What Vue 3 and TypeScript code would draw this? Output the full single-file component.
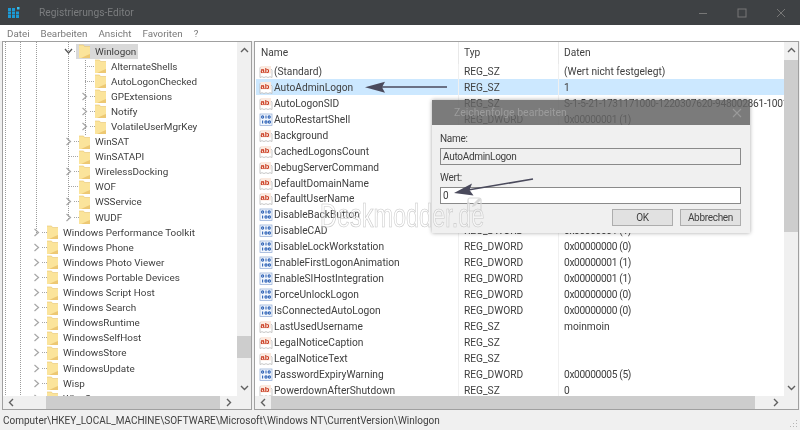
<script setup lang="ts">
interface TreeRow { name: string; level: number; kind: 'open' | 'closed' | 'leaf' }
interface ListRow { name: string; type: string; data: string; bin: boolean }
interface Guide { x: number; top: number; height: number }

const tree: TreeRow[] = [
  { name: 'Winlogon', level: 2, kind: 'open' },
  { name: 'AlternateShells', level: 3, kind: 'leaf' },
  { name: 'AutoLogonChecked', level: 3, kind: 'leaf' },
  { name: 'GPExtensions', level: 3, kind: 'closed' },
  { name: 'Notify', level: 3, kind: 'closed' },
  { name: 'VolatileUserMgrKey', level: 3, kind: 'closed' },
  { name: 'WinSAT', level: 2, kind: 'closed' },
  { name: 'WinSATAPI', level: 2, kind: 'leaf' },
  { name: 'WirelessDocking', level: 2, kind: 'closed' },
  { name: 'WOF', level: 2, kind: 'leaf' },
  { name: 'WSService', level: 2, kind: 'closed' },
  { name: 'WUDF', level: 2, kind: 'closed' },
  { name: 'Windows Performance Toolkit', level: 1, kind: 'closed' },
  { name: 'Windows Phone', level: 1, kind: 'closed' },
  { name: 'Windows Photo Viewer', level: 1, kind: 'closed' },
  { name: 'Windows Portable Devices', level: 1, kind: 'closed' },
  { name: 'Windows Script Host', level: 1, kind: 'closed' },
  { name: 'Windows Search', level: 1, kind: 'closed' },
  { name: 'WindowsRuntime', level: 1, kind: 'closed' },
  { name: 'WindowsSelfHost', level: 1, kind: 'closed' },
  { name: 'WindowsStore', level: 1, kind: 'closed' },
  { name: 'WindowsUpdate', level: 1, kind: 'closed' },
  { name: 'Wisp', level: 1, kind: 'closed' },
  { name: 'WlanSvc', level: 1, kind: 'closed' },
]

const guides: Guide[] = [
  { x: 2, top: 0, height: 355 },
  { x: 17, top: 0, height: 355 },
  { x: 33, top: 0, height: 192 },
  { x: 65, top: 0, height: 178 },
  { x: 82, top: 16, height: 78 },
]

const sz = (name: string, data = ''): ListRow => ({ name, type: 'REG_SZ', data, bin: false })
const dw = (name: string, data: string): ListRow => ({ name, type: 'REG_DWORD', data, bin: true })

const rows: ListRow[] = [
  sz('(Standard)', '(Wert nicht festgelegt)'),
  sz('AutoAdminLogon', '1'),
  sz('AutoLogonSID', 'S-1-5-21-1731171000-1220307620-948002861-1001'),
  dw('AutoRestartShell', '0x00000001 (1)'),
  sz('Background', '0 0 0'),
  sz('CachedLogonsCount', '10'),
  sz('DebugServerCommand', 'no'),
  sz('DefaultDomainName'),
  sz('DefaultUserName', 'moinmoin'),
  dw('DisableBackButton', '0x00000001 (1)'),
  dw('DisableCAD', '0x00000001 (1)'),
  dw('DisableLockWorkstation', '0x00000000 (0)'),
  dw('EnableFirstLogonAnimation', '0x00000001 (1)'),
  dw('EnableSIHostIntegration', '0x00000001 (1)'),
  dw('ForceUnlockLogon', '0x00000000 (0)'),
  dw('IsConnectedAutoLogon', '0x00000000 (0)'),
  sz('LastUsedUsername', 'moinmoin'),
  sz('LegalNoticeCaption'),
  sz('LegalNoticeText'),
  dw('PasswordExpiryWarning', '0x00000005 (5)'),
  sz('PowerdownAfterShutdown', '0'),
]

const menus = ['Datei', 'Bearbeiten', 'Ansicht', 'Favoriten', '?']
</script>

<template>
  <div class="win">
    <header class="titlebar">
      <svg class="appicon" width="12" height="11" viewBox="0 0 12 11">
        <g fill="#1c9ad6">
          <rect x="0" y="1" width="3" height="3" /><rect x="4" y="1" width="3" height="3" />
          <rect x="0" y="4.5" width="3" height="3" /><rect x="4" y="4.5" width="3" height="3" /><rect x="8" y="4.5" width="3" height="3" />
          <rect x="0" y="8" width="3" height="3" /><rect x="4" y="8" width="3" height="3" /><rect x="8" y="8" width="3" height="3" />
        </g>
        <rect x="9" y="0" width="2.5" height="2.5" fill="#35c0f0" />
      </svg>
      <span class="apptitle">Registrierungs-Editor</span>
      <div class="controls">
        <svg width="10" height="10" viewBox="0 0 10 10"><path d="M1 5.500h8" stroke="#777" fill="none" /></svg>
        <svg width="10" height="10" viewBox="0 0 10 10"><rect x="1" y="1" width="8" height="8" stroke="#777" fill="none" /></svg>
        <svg width="10" height="10" viewBox="0 0 10 10"><path d="M1 1l8 8M9 1l-8 8" stroke="#777" fill="none" /></svg>
      </div>
    </header>

    <nav class="menu">
      <span v-for="m in menus" :key="m">{{ m }}</span>
    </nav>

    <main class="panes">
      <section class="pane tree-pane">
        <div class="tree">
          <i v-for="g in guides" :key="g.x" class="guide" :style="{ left: g.x + 'px', top: g.top + 'px', height: g.height + 'px' }"></i>
          <div v-for="t in tree" :key="t.name" class="tree-row" :class="'lv' + t.level">
            <span class="exp">
              <svg v-if="t.kind === 'closed'" width="7" height="9" viewBox="0 0 7 9"><path d="M1.500 1l4 3.500-4 3.500" fill="none" stroke="#a6a6a6" stroke-width="1.2" /></svg>
              <svg v-else-if="t.kind === 'open'" width="9" height="7" viewBox="0 0 9 7"><path d="M1 1l3.500 4 3.500-4" fill="none" stroke="#555" stroke-width="1.3" /></svg>
            </span>
            <span class="dash" :class="{ long: t.kind === 'leaf' }"></span>
            <span class="node" :class="{ sel: t.name === 'Winlogon' }">
              <svg class="folder" width="11" height="14" viewBox="0 0 11 14">
                <path d="M0 1h4.500l1 1.500H11V14H0z" fill="#fbe49b" />
                <path d="M8.500 11l2.500-1v4H2z" fill="#edc873" />
                <path d="M0 1h4.500l1 1.500H11" fill="none" stroke="#e8c56e" stroke-width=".6" />
              </svg>
              <span class="label">{{ t.name }}</span>
            </span>
          </div>
        </div>
        <div class="vbar">
          <svg class="ar" width="9" height="7" viewBox="0 0 9 7"><path d="M1 5l3.500-3.500L8 5" fill="none" stroke="#606060" stroke-width="1.4" /></svg>
          <div class="track tree-track"><div class="thumb tree-thumb"></div></div>
          <svg class="ar" width="9" height="7" viewBox="0 0 9 7"><path d="M1 2l3.500 3.500L8 2" fill="none" stroke="#606060" stroke-width="1.4" /></svg>
        </div>
        <div class="hbar">
          <svg class="ar" width="7" height="9" viewBox="0 0 7 9"><path d="M5 1L1.500 4.500 5 8" fill="none" stroke="#606060" stroke-width="1.4" /></svg>
          <div class="track htrack"><div class="thumb tree-hthumb"></div></div>
          <svg class="ar" width="7" height="9" viewBox="0 0 7 9"><path d="M2 1l3.500 3.500L2 8" fill="none" stroke="#606060" stroke-width="1.4" /></svg>
        </div>
        <div class="corner"></div>
      </section>

      <section class="pane list-pane">
        <div class="list">
          <div class="list-head">
            <span class="c-name">Name</span>
            <span class="c-type">Typ</span>
            <span class="c-data">Daten</span>
          </div>
          <div v-for="r in rows" :key="r.name" class="list-row" :class="{ picked: r.name === 'AutoAdminLogon' }">
            <span class="c-name">
              <svg v-if="!r.bin" class="ico" width="14" height="15" viewBox="0 0 14 15">
                <path d="M1 3.500h9.500l2.500 2.500v7.500l-2-.8-2 .8-2-.8-2 .8-2-.8-2 .8z" fill="#fff" stroke="#b9b9b9" stroke-width=".8" />
                <rect x="1.500" y="2" width="10.500" height="7.500" fill="#fbe9df" />
                <text x="1.600" y="8.800" class="ab">ab</text>
              </svg>
              <svg v-else class="ico" width="14" height="15" viewBox="0 0 14 15">
                <rect x="1" y="2" width="12" height="11.500" fill="#f3f7fd" stroke="#8fa9d4" stroke-width=".7" />
                <g fill="none" stroke="#2f63b6" stroke-width="1.1">
                  <circle cx="3.600" cy="5" r="1.100" /><path d="M7 3.600v3" /><circle cx="10.200" cy="5" r="1.100" />
                  <path d="M3.600 8.600v3" /><circle cx="7" cy="10" r="1.100" /><circle cx="10.400" cy="10" r="1.100" />
                </g>
              </svg>
              {{ r.name }}
            </span>
            <span class="c-type">{{ r.type }}</span>
            <span class="c-data" :class="{ hex: r.bin, sid: r.data.startsWith('S-1') }">{{ r.data }}</span>
          </div>
        </div>
        <div class="vbar">
          <svg class="ar" width="9" height="7" viewBox="0 0 9 7"><path d="M1 5l3.500-3.500L8 5" fill="none" stroke="#606060" stroke-width="1.4" /></svg>
          <div class="track list-track"><div class="thumb list-thumb"></div></div>
          <svg class="ar" width="9" height="7" viewBox="0 0 9 7"><path d="M1 2l3.500 3.500L8 2" fill="none" stroke="#606060" stroke-width="1.4" /></svg>
        </div>
        <div class="hbar">
          <svg class="ar" width="7" height="9" viewBox="0 0 7 9"><path d="M5 1L1.500 4.500 5 8" fill="none" stroke="#606060" stroke-width="1.4" /></svg>
          <div class="track htrack"><div class="thumb list-hthumb"></div></div>
          <svg class="ar" width="7" height="9" viewBox="0 0 7 9"><path d="M2 1l3.500 3.500L2 8" fill="none" stroke="#606060" stroke-width="1.4" /></svg>
        </div>
        <div class="corner"></div>
      </section>
    </main>

    <footer class="status">
      <span>Computer\HKEY_LOCAL_MACHINE\SOFTWARE\Microsoft\Windows NT\CurrentVersion\Winlogon</span>
      <svg class="grip" width="8" height="8" viewBox="0 0 8 8" fill="#b5b5b5">
        <rect x="6" y="0" width="1" height="1" /><rect x="3" y="3" width="1" height="1" /><rect x="6" y="3" width="1" height="1" />
        <rect x="0" y="6" width="1" height="1" /><rect x="3" y="6" width="1" height="1" /><rect x="6" y="6" width="1" height="1" />
      </svg>
    </footer>

    <div class="dialog">
      <div class="dlg-title">
        <span>Zeichenfolge bearbeiten</span>
        <svg width="10" height="10" viewBox="0 0 10 10"><path d="M1 1l8 8M9 1l-8 8" stroke="#9a9a9a" stroke-width="1.100" fill="none" /></svg>
      </div>
      <div class="dlg-body">
        <label>Name:</label>
        <div class="field ro">AutoAdminLogon</div>
        <label class="wert">Wert:</label>
        <div class="field">0</div>
        <div class="btns">
          <span class="btn">OK</span>
          <span class="btn">Abbrechen</span>
        </div>
      </div>
    </div>

    <svg class="arrows" width="800" height="430" viewBox="0 0 800 430">
      <path d="M447 87H382" stroke="#4a4a5c" stroke-width="1.600" fill="none" />
      <path d="M365 87.200l20-5.500-3 5.500 3 5.500z" fill="#4a4a5c" />
      <path d="M533 179L468 190" stroke="#4a4a5c" stroke-width="1.600" fill="none" />
      <path d="M454 193l18-9.500-2.500 6.500 4 5.500z" fill="#4a4a5c" />
    </svg>

    <div class="mark">
      <span class="mark-text">Deskmodder.de</span>
      <svg width="16" height="16" viewBox="0 0 16 16">
        <rect x="1" y="2" width="13" height="13" rx="2" fill="none" stroke="#d8d8d8" stroke-width="1.200" />
        <path d="M5 11l1-3 6-6 2 2-6 6z" fill="#d8d8d8" />
      </svg>
    </div>
  </div>
</template>

<style scoped>
.win {
  position: relative;
  width: 800px;
  height: 430px;
  overflow: hidden;
  display: flex;
  flex-direction: column;
  background: #f0f0f0;
  font-family: Roboto, "Open Sans", sans-serif;
  font-size: 10.2px;
  color: #404040;
  filter: blur(0.35px);
}

.titlebar {
  height: 25px;
  flex: none;
  display: flex;
  align-items: center;
  padding-left: 8px;
  background: #3e4144;
  color: #7b7d7f;
  font-size: 10.2px;
}
.apptitle { margin-left: 19px; }
.controls {
  margin-left: auto;
  display: flex;
  gap: 29px;
  padding-right: 14px;
}

.menu {
  height: 16px;
  flex: none;
  display: flex;
  align-items: center;
  gap: 11px;
  padding-left: 7px;
  background: #fff;
  color: #7a7a7a;
  font-size: 9.8px;
}

.panes {
  flex: 1;
  min-height: 0;
  display: flex;
  gap: 2px;
  padding-left: 2px;
  padding-right: 1px;
  background: #f0f0f0;
}
.pane {
  display: grid;
  grid-template-columns: 1fr 14px;
  grid-template-rows: 1fr 13px;
  border: 1px solid #a0a0a0;
  background: #fff;
  min-width: 0;
  overflow: hidden;
}
.tree-pane { width: 248px; flex: none; }
.list-pane { flex: 1; }

.tree {
  position: relative;
  overflow: hidden;
  padding-top: 1.5px;
  min-width: 0;
  font-size: 9.9px;
}
.guide {
  position: absolute;
  width: 1px;
  background-image: repeating-linear-gradient(to bottom, #9c9c9c 0 1px, transparent 1px 2px);
}
.tree-row {
  position: relative;
  height: 15.1px;
  display: flex;
  align-items: center;
  white-space: nowrap;
}
.lv1 { padding-left: 28px; }
.lv2 { padding-left: 60px; }
.lv3 { padding-left: 76px; }
.exp {
  width: 11px;
  flex: none;
  display: flex;
  justify-content: center;
  align-items: center;
}
.dash {
  width: 5px;
  flex: none;
  height: 1px;
  background-image: repeating-linear-gradient(to right, #a5a5a5 0 1px, transparent 1px 2px);
}
.dash.long {
  width: 10px;
  margin-left: -5px;
}
.node {
  display: flex;
  align-items: center;
  height: 15px;
  padding-right: 2px;
}
.node.sel {
  background: #d9d9d9;
  margin-left: -3px;
  padding-left: 3px;
}
.folder { flex: none; }
.label { margin-left: 5px; }

.vbar {
  display: flex;
  flex-direction: column;
  align-items: center;
  background: #f0f0f0;
  min-height: 0;
}
.vbar .ar { flex: none; margin: 5px 0; }
.track { flex: 1; position: relative; align-self: stretch; }
.thumb { position: absolute; background: #cdcdcd; }
.tree-thumb { left: 0; right: 0; top: 277px; height: 22px; }
.list-thumb { left: 0; right: 0; top: 1px; height: 172px; }

.hbar {
  display: flex;
  align-items: center;
  background: #f0f0f0;
  min-width: 0;
  padding: 0 5px;
}
.htrack { height: 100%; margin: 0 4px; }
.tree-hthumb { top: 0; bottom: 0; left: 27px; width: 174px; }
.list-hthumb { top: 0; bottom: 0; left: 0; width: 484px; }
.corner { background: #f0f0f0; }

.list { overflow: hidden; min-width: 0; padding-left: 1px; }
.list-head {
  height: 21.5px;
  display: flex;
  align-items: center;
}
.list-row {
  height: 15.95px;
  display: flex;
  align-items: center;
  white-space: nowrap;
}
.list-row.picked { background: #cce8ff; }
.c-name {
  width: 203px;
  flex: none;
  padding-left: 5px;
  display: flex;
  align-items: center;
  height: 100%;
  border-right: 1px solid #e8e8e8;
  box-sizing: border-box;
}
.c-type {
  width: 100px;
  flex: none;
  padding-left: 5px;
  height: 100%;
  display: flex;
  align-items: center;
  border-right: 1px solid #e8e8e8;
  box-sizing: border-box;
}
.c-data { padding-left: 5px; height: 100%; display: flex; align-items: center; }
.c-data.hex { letter-spacing: -0.35px; }
.c-data.sid { letter-spacing: -0.3px; }
.list-row .c-name, .list-row .c-type { border-right-color: #f0f0f0; }
.ico { flex: none; margin: 0 1px 0 -2px; }
.ab {
  font-family: "Liberation Sans", sans-serif;
  font-size: 7.5px;
  font-weight: 700;
  fill: #c8391f;
}

.status {
  height: 20px;
  flex: none;
  display: flex;
  align-items: center;
  padding-left: 3px;
  background: #f0f0f0;
  position: relative;
  font-size: 10px;
}
.grip { position: absolute; right: 2px; bottom: 2px; }

.dialog {
  position: absolute;
  left: 432px;
  top: 100px;
  width: 318px;
  height: 133px;
  display: flex;
  flex-direction: column;
  box-shadow: 0 0 4px rgba(0, 0, 0, 0.35);
}
.dlg-title {
  height: 25px;
  flex: none;
  display: flex;
  align-items: center;
  justify-content: space-between;
  padding: 0 8px 0 22px;
  background: rgba(100, 100, 100, 0.85);
  color: #9c9c9c;
  font-size: 10.5px;
}
.dlg-body {
  flex: 1;
  background: #f0f0f0;
  padding: 7px 9px 0 8px;
  display: flex;
  flex-direction: column;
  font-size: 10px;
  letter-spacing: -0.3px;
}
.dlg-body label { height: 16px; line-height: 14px; }
.field {
  height: 17px;
  box-sizing: border-box;
  border: 1px solid #8a8a8a;
  background: #fff;
  padding-left: 2px;
  display: flex;
  align-items: center;
}
.field.ro { background: #f0f0f0; }
.wert { margin-top: 6px; margin-bottom: 0; }
.btns {
  display: flex;
  justify-content: flex-end;
  gap: 7px;
  margin-top: 5px;
}
.btn {
  width: 61px;
  height: 17px;
  box-sizing: border-box;
  border: 1px solid #adadad;
  background: #e1e1e1;
  display: flex;
  align-items: center;
  justify-content: center;
}

.arrows { position: absolute; left: 0; top: 0; pointer-events: none; }

.mark {
  position: absolute;
  left: 320px;
  top: 196px;
  display: flex;
  align-items: flex-start;
  gap: 1px;
}
.mark-text {
  display: block;
  width: 146px;
  font-family: "Liberation Sans", sans-serif;
  font-size: 34px;
  line-height: 38px;
  white-space: nowrap;
  color: rgba(255, 255, 255, 0.35);
  -webkit-text-stroke: 0.7px #c8c8c8;
  transform: scaleX(0.69);
  transform-origin: left top;
}
</style>
